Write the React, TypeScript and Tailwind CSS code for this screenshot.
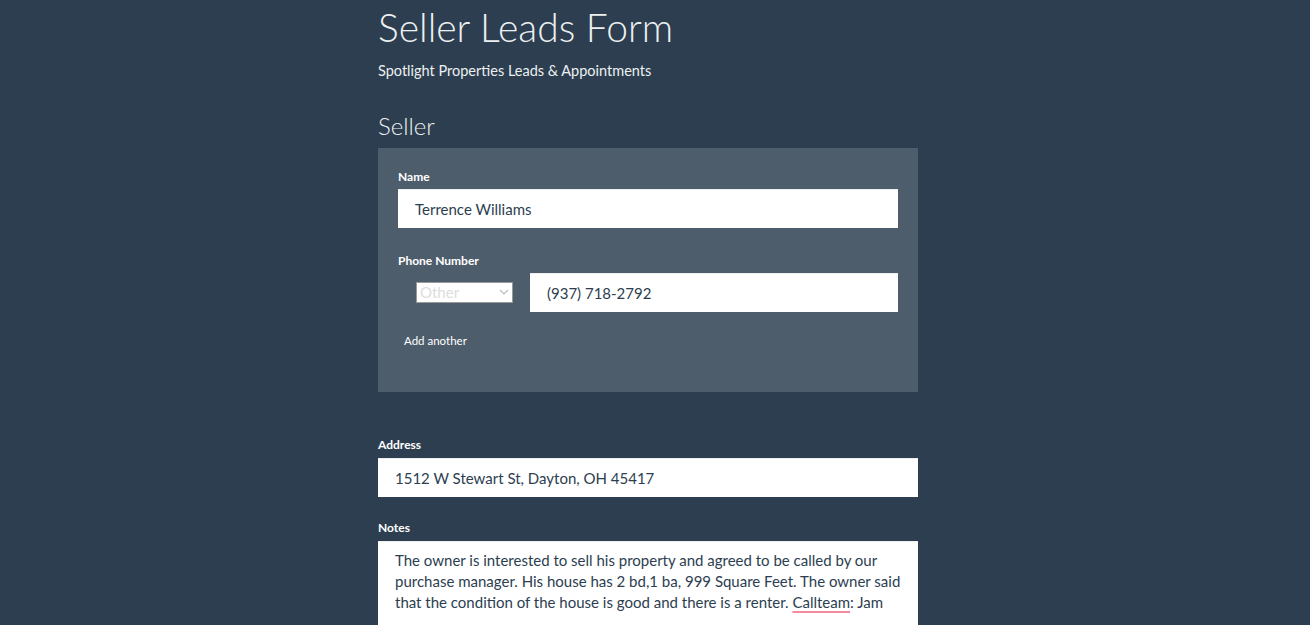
export default function App() {
  return (
    <div className="min-h-screen bg-[#2c3e50] font-['Lato',sans-serif] text-white">
      <div className="w-[540px] ml-[378px]">
        <h1 className="text-[39px] font-light leading-none pt-[8px] text-[#ecf0f1]">Seller Leads Form</h1>
        <p className="text-[14.5px] mt-[13px] text-[#ecf0f1]">Spotlight Properties Leads &amp; Appointments</p>

        <h2 className="text-[24px] font-light mt-[32px] leading-none text-[#ecf0f1]">Seller</h2>

        <div className="mt-[10px] bg-[#4e5d6c] px-[20px] pt-[21px] h-[244px]">
          <label className="block text-[12px] leading-[16px] font-bold">Name</label>
          <div className="mt-[4px] h-[39px] bg-white border-t border-[#eee] flex items-center px-[17px] text-[15px] text-[#2c3e50]">
            Terrence Williams
          </div>

          <label className="block text-[12px] leading-[16px] font-bold mt-[25px]">Phone Number</label>
          <div className="mt-[4px] flex items-center">
            <div className="ml-[18px] w-[97px] h-[21px] bg-white border border-[#999] flex items-center justify-between px-[3px] text-[15px] text-[#ddd] leading-none">
              <span>Other</span>
              <svg width="10" height="6" viewBox="0 0 10 6" fill="none" stroke="#bbb" strokeWidth="1.2">
                <path d="M1 1l4 4 4-4" />
              </svg>
            </div>
            <div className="ml-[17px] flex-1 h-[39px] bg-white border-t border-[#eee] flex items-center px-[17px] text-[15px] text-[#2c3e50]">
              (937) 718-2792
            </div>
          </div>

          <div className="mt-[20px] ml-[6px] text-[11.5px]">Add another</div>
        </div>

        <label className="block text-[12px] leading-[16px] font-bold mt-[45px]">Address</label>
        <div className="mt-[5px] h-[39px] bg-white border-t border-[#eee] flex items-center px-[17px] text-[15px] text-[#2c3e50]">
          1512 W Stewart St, Dayton, OH 45417
        </div>

        <label className="block text-[12px] leading-[16px] font-bold mt-[23px]">Notes</label>
        <div className="mt-[5px] h-[100px] bg-white border-t border-[#eee] px-[17px] pt-[8px] text-[15px] leading-[21px] text-[#2c3e50]">
          The owner is interested to sell his property and agreed to be called by our purchase manager. His house has 2 bd,1 ba, 999 Square Feet. The owner said that the condition of the house is good and there is a renter.{" "}
          <span className="underline decoration-[#f48ba0] decoration-2 underline-offset-[3px]">Callteam</span>: Jam
        </div>
      </div>
    </div>
  );
}
